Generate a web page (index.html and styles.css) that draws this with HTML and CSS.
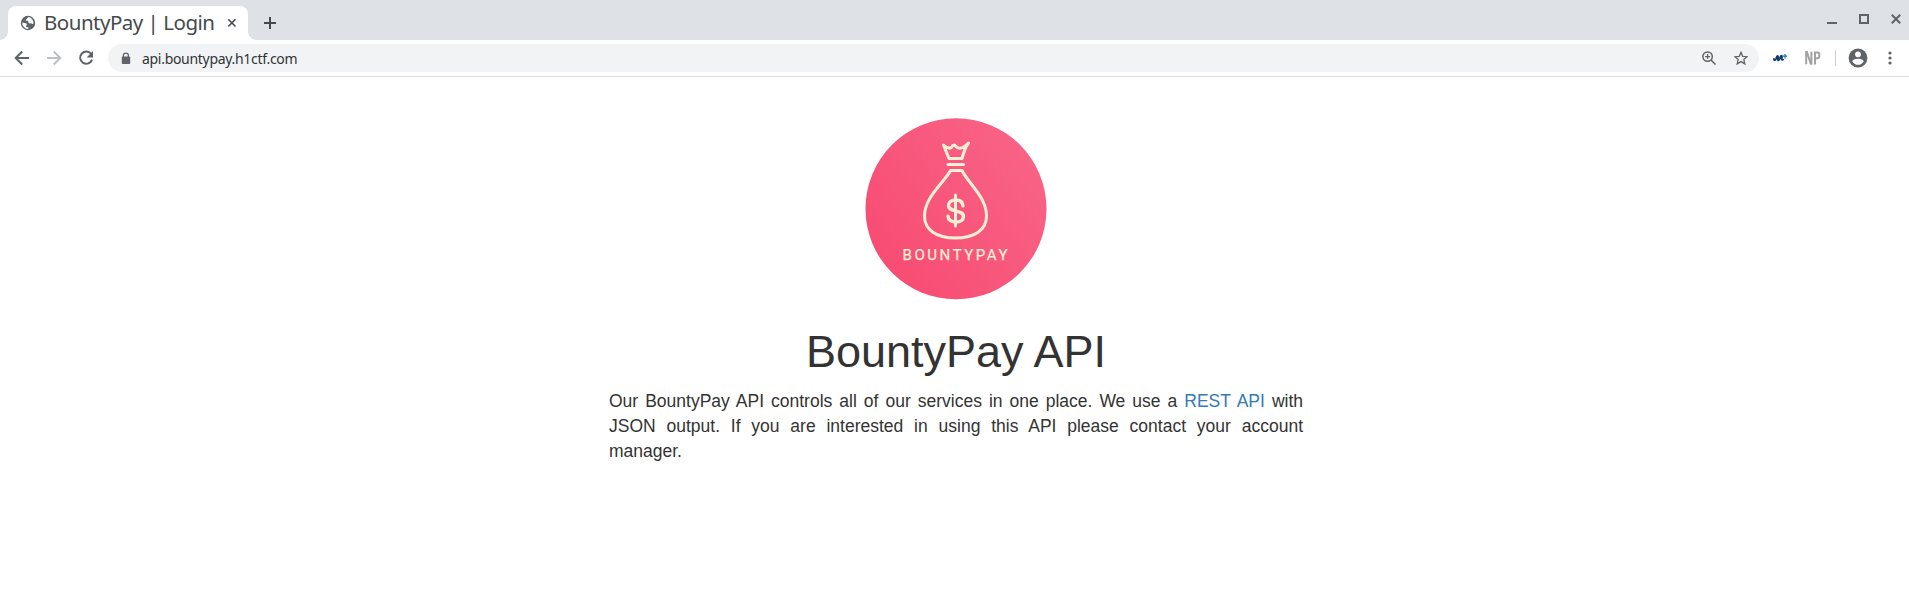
FILE: index.html
```html
<!DOCTYPE html>
<html lang="en">
<head>
<meta charset="utf-8">
<title>BountyPay | Login</title>
<link rel="stylesheet" href="styles.css">
</head>
<body>
<header class="browser">
  <div class="tabstrip">
    <div class="tab">
      <svg class="favicon" width="16" height="16" viewBox="0 0 16 16"><circle cx="8" cy="8" r="7.2" fill="#5f6368"/><path d="M8.7 2.1C7.2 2.5 7.7 3.8 6.3 4.3 5.3 4.7 5.6 6 6.8 5.8c1.1-.2 1.7.3 1.6 1.3-.1 1 .9 1.5 2 1.3 1-.2 1.3.8 2.9.5A5.9 5.9 0 0 0 8.7 2.1zM2.2 7.4c1.5.7 3.5.2 4.3 1.2.9 1.1-.3 1.7-.4 2.6-.1.8.9 1.3 2.3 1.1l-.1 1.6A6 6 0 0 1 2.2 7.4z" fill="#fff"/></svg>
      <span class="tab-title">BountyPay | Login</span>
      <svg class="tab-close" width="10" height="10" viewBox="0 0 10 10"><path d="M1.3 1.3l7.2 7.2M8.5 1.3L1.3 8.5" stroke="#45494d" stroke-width="1.6"/></svg>
    </div>
    <svg class="new-tab" width="14" height="14" viewBox="0 0 14 14"><path d="M7 1v12M1 7h12" stroke="#45494d" stroke-width="2"/></svg>
    <div class="window-controls">
      <svg width="10" height="12" viewBox="0 0 10 12"><path d="M0 10h10" stroke="#5f6368" stroke-width="2"/></svg>
      <svg width="10" height="12" viewBox="0 0 10 12"><path d="M1 2h8v8H1z" fill="none" stroke="#5f6368" stroke-width="2"/></svg>
      <svg width="10" height="12" viewBox="0 0 10 12"><path d="M.8 1.8l8.4 8.4M9.2 1.8L.8 10.2" stroke="#5f6368" stroke-width="2"/></svg>
    </div>
  </div>
  <div class="toolbar">
    <div class="nav">
      <svg width="16" height="16" viewBox="0 0 16 16"><path d="M15 8H2.2M8.2 1.5L1.7 8l6.5 6.5" fill="none" stroke="#5f6368" stroke-width="2"/></svg>
      <svg width="16" height="16" viewBox="0 0 16 16"><path d="M1 8h12.8M7.8 1.5L14.3 8l-6.5 6.5" fill="none" stroke="#bdc0c3" stroke-width="2"/></svg>
      <svg width="16" height="16" viewBox="0 0 16 16"><path d="M13.3 4.3A6.1 6.1 0 1 0 14 9.6" fill="none" stroke="#5f6368" stroke-width="2"/><path d="M15 1v6.4H8.6z" fill="#5f6368"/></svg>
    </div>
    <div class="address">
      <svg width="10" height="13" viewBox="0 0 10 13"><path d="M2.4 5V3.6a2.5 2.5 0 0 1 5 0V5" fill="none" stroke="#5f6368" stroke-width="1.3"/><rect x=".8" y="4.4" width="8.4" height="7.6" rx="1" fill="#5f6368"/></svg>
      <span class="url">api.bountypay.h1ctf.com</span>
      <svg class="magnifier" width="14" height="14" viewBox="0 0 14 14"><g fill="none" stroke="#5f6368" stroke-width="1.5"><circle cx="5.6" cy="5.6" r="4.7"/><path d="M9 9l4.5 4.5"/><path d="M5.6 3.1v5M3.1 5.6h5" stroke-width="1.2"/></g></svg>
      <svg width="14" height="14" viewBox="0 0 14 14"><path d="M7 1.3l1.7 4 4.4.4-3.3 2.9 1 4.3L7 10.6l-3.8 2.3 1-4.3L.9 5.7l4.4-.4z" fill="none" stroke="#5f6368" stroke-width="1.3"/></svg>
    </div>
    <svg class="movistar" width="14" height="10" viewBox="0 0 14 10"><path d="M1 5.2C.8 8.2 2.6 7.4 3.2 5.4 3.8 3.200 4.800 2 5 3.700c.1 1.600-.5 3.900.6 3.700C6.900 7.200 7 2.700 8.400 2.600c1.100 0 .1 2.400.4 3.600.2 1 1.200.6 1.600-.3" fill="none" stroke="#0b3c6c" stroke-width="1.900"/><path d="M12 1v4.400M9.800 3.200h4.200" stroke="#1678b8" stroke-width="1.200"/></svg>
    <svg class="np" width="16" height="14" viewBox="0 0 16 14"><path d="M1.2 13.3V1h.8l3.7 11.8h.7V.8M10 13.4V1.5h2.4q1.9 0 1.9 1.8v2q0 2-1.900 2H10" fill="none" stroke="#a2a2a2" stroke-width="2"/></svg>
    <span class="divider"></span>
    <svg class="avatar" width="20" height="20" viewBox="0 0 20 20"><circle cx="10" cy="10" r="9.4" fill="#5f6368"/><circle cx="10" cy="6.3" r="2.9" fill="#fff"/><path d="M4.3 13.6c0-3.9 11.4-3.9 11.4 0A6.7 6.7 0 0 1 4.3 13.6z" fill="#fff"/></svg>
    <svg class="menu" width="4" height="14" viewBox="0 0 4 14"><g fill="#5f6368"><circle cx="2" cy="2" r="1.6"/><circle cx="2" cy="7" r="1.6"/><circle cx="2" cy="12" r="1.6"/></g></svg>
  </div>
</header>
<main class="page">
  <svg class="logo" width="182" height="182" viewBox="0 0 182 182">
    <defs><linearGradient id="pink" x1="0" y1=".75" x2=".85" y2=".1"><stop offset="0" stop-color="#f84b72"/><stop offset="1" stop-color="#f86386"/></linearGradient></defs>
    <circle cx="91" cy="90.8" r="90.5" fill="url(#pink)"/>
    <g fill="none" stroke="#fdf0d5" stroke-width="3" stroke-linejoin="round" stroke-linecap="round">
      <path d="M84 40.5L78.5 27Q83.5 31.5 86.300 29.500Q88 26.500 89.500 27L92 29.500Q97 32 103.500 25Q100 29.500 97 40.500z"/>
      <path d="M83 46.5h15.5"/>
      <path d="M85.5 52.5h11.5C103 65 121.5 79 121.5 98c0 14-12 22-31 22s-31-8-31-22C59.5 79 79 65 85.5 52.5z"/>
      <path d="M90.5 77v31"/>
      <path stroke-width="3.4" d="M98 87.800c-.3-4-3.500-5.800-7.300-5.800-4 0-7.200 2-7.200 5.600 0 7.200 15 3.800 15 10.900 0 3.600-3.400 5.600-7.600 5.600-4.200 0-7.700-1.900-7.900-5.900"/>
    </g>
    <text class="logo-text" x="37.5" y="142" textLength="105">BOUNTYPAY</text>
  </svg>
  <h1 class="heading">BountyPay API</h1>
  <p class="intro">Our BountyPay API controls all of our services in one place. We use a <a class="link">REST API</a> with JSON output. If you are interested in using this API please contact your account manager.</p>
</main>
</body>
</html>
```
FILE: styles.css
```css
* { box-sizing: border-box; }
body { margin: 0; background: #fff; color: #333; font-family: "Liberation Sans", Arial, sans-serif; }
svg { display: block; flex: none; }
.browser { height: 77px; border-bottom: 1px solid #dadce0; font-family: "Noto Sans", sans-serif; }
.tabstrip { height: 40px; padding: 6px 8px 0 8px; background: #dee1e6; display: flex; }
.tab { position: relative; width: 240px; height: 34px; padding: 0 12px; display: flex; align-items: center; background: #fff; border-radius: 8px 8px 0 0; }
.tab::before, .tab::after { content: ""; position: absolute; bottom: 0; width: 8px; height: 8px; }
.tab::before { left: -8px; background: radial-gradient(circle at 0 0, transparent 7.5px, #fff 8px); }
.tab::after { right: -8px; background: radial-gradient(circle at 100% 0, transparent 7.5px, #fff 8px); }
.tab-title { width: 171px; margin: 0 0 2px 8px; font-size: 20.5px; letter-spacing: -.5px; line-height: 32px; white-space: nowrap; color: #45494d; }
.tab-close { margin-left: 13px; }
.new-tab { margin: 10px 0 0 15px; }
.window-controls { display: flex; gap: 22px; margin: 7px 0 0 auto; }
.toolbar { height: 36px; padding: 0 17px 0 14px; display: flex; align-items: center; }
.nav { display: flex; gap: 16px; margin-right: 14px; }
.address { flex: 1; height: 28px; border-radius: 14px; padding: 0 11px 0 13px; background: #f1f3f4; display: flex; align-items: center; }
.url { margin-left: 11px; font-size: 14px; letter-spacing: -.3px; color: #303336; white-space: nowrap; }
.magnifier { margin: 0 18px 0 auto; }
.movistar { margin-left: 14px; }
.np { margin-left: 18px; }
.divider { width: 1px; height: 16px; margin: 0 12px 0 14px; background: #ccced1; }
.menu { margin-left: 20px; }
.page { width: 694px; margin: 0 0 0 609px; padding-top: 41px; }
.logo { margin: 0 auto; }
.logo-text { font: 15px Roboto, sans-serif; fill: #fdf0d5; stroke: #fdf0d5; stroke-width: .25px; }
.heading { margin: 27px 0 12px; font-size: 45px; font-weight: 400; line-height: 50px; text-align: center; }
.intro { margin: 0; font-size: 17.5px; line-height: 25px; text-align: justify; }
.link { color: #337ab7; }
```
